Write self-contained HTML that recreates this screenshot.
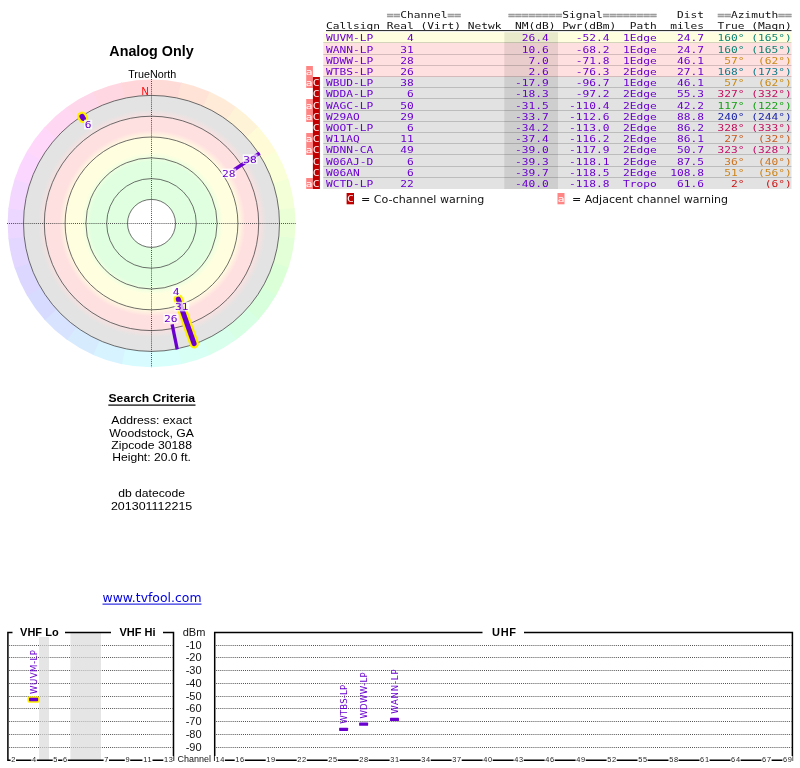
<!DOCTYPE html>
<html><head><meta charset="utf-8"><title>TV Fool radar plot</title>
<style>html,body{margin:0;padding:0;background:#fff}svg{display:block;will-change:transform}.m{font-family:"DejaVu Sans Mono", "Liberation Mono", monospace;font-size:11.21px}.s{font-family:"Liberation Sans", sans-serif}.d{font-family:"DejaVu Sans", "Liberation Sans", sans-serif}.c{font-family:"DejaVu Sans Condensed", "DejaVu Sans", "Liberation Sans", sans-serif}</style></head><body>
<svg width="800" height="768" viewBox="0 0 800 768">
<rect width="800" height="768" fill="#fff"/>
<defs><radialGradient id="rg" gradientUnits="userSpaceOnUse" cx="152.3" cy="223.4" r="128">
<stop offset="0.0000" stop-color="#e0ffe0"/>
<stop offset="0.4805" stop-color="#e0ffe0"/>
<stop offset="0.5547" stop-color="#ffffe0"/>
<stop offset="0.6641" stop-color="#ffffe0"/>
<stop offset="0.7266" stop-color="#ffe0e0"/>
<stop offset="0.8203" stop-color="#ffe0e0"/>
<stop offset="0.8906" stop-color="#e3e3e3"/>
<stop offset="1.0000" stop-color="#e3e3e3"/>
</radialGradient></defs>
<path d="M151.5 223.4 L151.12 79.50 A143.9 143.9 0 0 1 181.79 82.72 Z" fill="#ffdbd7"/>
<path d="M151.5 223.4 L181.05 82.57 A143.9 143.9 0 0 1 210.37 92.09 Z" fill="#ffe3d7"/>
<path d="M151.5 223.4 L209.69 91.79 A143.9 143.9 0 0 1 236.39 107.20 Z" fill="#ffebd7"/>
<path d="M151.5 223.4 L235.78 106.76 A143.9 143.9 0 0 1 258.69 127.39 Z" fill="#fff3d7"/>
<path d="M151.5 223.4 L258.19 126.83 A143.9 143.9 0 0 1 276.31 151.78 Z" fill="#fffbd7"/>
<path d="M151.5 223.4 L275.93 151.12 A143.9 143.9 0 0 1 288.47 179.29 Z" fill="#fbffd7"/>
<path d="M151.5 223.4 L288.24 178.57 A143.9 143.9 0 0 1 294.65 208.73 Z" fill="#f3ffd7"/>
<path d="M151.5 223.4 L294.57 207.98 A143.9 143.9 0 0 1 294.57 238.82 Z" fill="#ebffd7"/>
<path d="M151.5 223.4 L294.65 238.07 A143.9 143.9 0 0 1 288.24 268.23 Z" fill="#e3ffd7"/>
<path d="M151.5 223.4 L288.47 267.51 A143.9 143.9 0 0 1 275.93 295.68 Z" fill="#dbffd7"/>
<path d="M151.5 223.4 L276.31 295.02 A143.9 143.9 0 0 1 258.19 319.97 Z" fill="#d7ffdb"/>
<path d="M151.5 223.4 L258.69 319.41 A143.9 143.9 0 0 1 235.78 340.04 Z" fill="#d7ffe3"/>
<path d="M151.5 223.4 L236.39 339.60 A143.9 143.9 0 0 1 209.69 355.01 Z" fill="#d7ffeb"/>
<path d="M151.5 223.4 L210.37 354.71 A143.9 143.9 0 0 1 181.05 364.23 Z" fill="#d7fff3"/>
<path d="M151.5 223.4 L181.79 364.08 A143.9 143.9 0 0 1 151.12 367.30 Z" fill="#d7fffb"/>
<path d="M151.5 223.4 L151.88 367.30 A143.9 143.9 0 0 1 121.21 364.08 Z" fill="#d7fbff"/>
<path d="M151.5 223.4 L121.95 364.23 A143.9 143.9 0 0 1 92.63 354.71 Z" fill="#d7f3ff"/>
<path d="M151.5 223.4 L93.31 355.01 A143.9 143.9 0 0 1 66.61 339.60 Z" fill="#d7ebff"/>
<path d="M151.5 223.4 L67.22 340.04 A143.9 143.9 0 0 1 44.31 319.41 Z" fill="#d7e3ff"/>
<path d="M151.5 223.4 L44.81 319.97 A143.9 143.9 0 0 1 26.69 295.02 Z" fill="#d7dbff"/>
<path d="M151.5 223.4 L27.07 295.68 A143.9 143.9 0 0 1 14.53 267.51 Z" fill="#dbd7ff"/>
<path d="M151.5 223.4 L14.76 268.23 A143.9 143.9 0 0 1 8.35 238.07 Z" fill="#e3d7ff"/>
<path d="M151.5 223.4 L8.43 238.82 A143.9 143.9 0 0 1 8.43 207.98 Z" fill="#ebd7ff"/>
<path d="M151.5 223.4 L8.35 208.73 A143.9 143.9 0 0 1 14.76 178.57 Z" fill="#f3d7ff"/>
<path d="M151.5 223.4 L14.53 179.29 A143.9 143.9 0 0 1 27.07 151.12 Z" fill="#fbd7ff"/>
<path d="M151.5 223.4 L26.69 151.78 A143.9 143.9 0 0 1 44.81 126.83 Z" fill="#ffd7fb"/>
<path d="M151.5 223.4 L44.31 127.39 A143.9 143.9 0 0 1 67.22 106.76 Z" fill="#ffd7f3"/>
<path d="M151.5 223.4 L66.61 107.20 A143.9 143.9 0 0 1 93.31 91.79 Z" fill="#ffd7eb"/>
<path d="M151.5 223.4 L92.63 92.09 A143.9 143.9 0 0 1 121.95 82.57 Z" fill="#ffd7e3"/>
<path d="M151.5 223.4 L121.21 82.72 A143.9 143.9 0 0 1 151.88 79.50 Z" fill="#ffd7db"/>
<circle cx="151.5" cy="223.4" r="128" fill="url(#rg)"/>
<circle cx="151.5" cy="223.4" r="24" fill="#fff"/>
<circle cx="151.5" cy="223.4" r="24.0" fill="none" stroke="#383838" stroke-width="0.72"/>
<circle cx="151.5" cy="223.4" r="44.8" fill="none" stroke="#383838" stroke-width="0.72"/>
<circle cx="151.5" cy="223.4" r="65.6" fill="none" stroke="#383838" stroke-width="0.72"/>
<circle cx="151.5" cy="223.4" r="86.4" fill="none" stroke="#383838" stroke-width="0.72"/>
<circle cx="151.5" cy="223.4" r="107.2" fill="none" stroke="#383838" stroke-width="0.72"/>
<circle cx="151.5" cy="223.4" r="128.0" fill="none" stroke="#383838" stroke-width="0.72"/>
<line x1="7" y1="223.5" x2="296" y2="223.5" stroke="#1a1a1a" stroke-width="0.8" stroke-dasharray="0.95 1.11"/>
<line x1="151.5" y1="79" x2="151.5" y2="367.5" stroke="#1a1a1a" stroke-width="0.8" stroke-dasharray="0.95 1.11"/>
<line x1="234.11" y1="169.75" x2="259.69" y2="153.14" stroke="#6a00d0" stroke-width="3.4" stroke-linecap="butt"/>
<line x1="172.12" y1="324.31" x2="177.23" y2="349.30" stroke="#6a00d0" stroke-width="3.3" stroke-linecap="butt"/>
<line x1="178.30" y1="299.09" x2="194.09" y2="343.68" stroke="#fff000" stroke-width="9.6" stroke-linecap="round"/>
<line x1="178.30" y1="299.09" x2="194.09" y2="343.68" stroke="#6a00d0" stroke-width="5.0" stroke-linecap="round"/>
<line x1="83.26" y1="118.31" x2="82.06" y2="116.47" stroke="#fff000" stroke-width="9.8" stroke-linecap="round"/>
<line x1="83.26" y1="118.31" x2="82.06" y2="116.47" stroke="#6a00d0" stroke-width="5.2" stroke-linecap="round"/>
<rect x="221.4" y="168.6" width="14.8" height="9.6" fill="#fff" fill-opacity="0.72"/>
<text class="m" transform="translate(228.8 177.0) scale(1 0.84)" text-anchor="middle" fill="#6a00d0">28</text>
<rect x="242.7" y="154.3" width="14.8" height="9.6" fill="#fff" fill-opacity="0.72"/>
<text class="m" transform="translate(250.1 162.7) scale(1 0.84)" text-anchor="middle" fill="#6a00d0">38</text>
<rect x="84.0" y="119.8" width="8.2" height="9.6" fill="#fff" fill-opacity="0.72"/>
<text class="m" transform="translate(88.1 128.2) scale(1 0.84)" text-anchor="middle" fill="#6a00d0">6</text>
<rect x="163.4" y="313.7" width="14.8" height="9.6" fill="#fff" fill-opacity="0.72"/>
<text class="m" transform="translate(170.8 322.1) scale(1 0.84)" text-anchor="middle" fill="#6a00d0">26</text>
<rect x="171.9" y="286.7" width="8.2" height="9.6" fill="#fff" fill-opacity="0.72"/>
<text class="m" transform="translate(176.0 295.1) scale(1 0.84)" text-anchor="middle" fill="#6a00d0">4</text>
<rect x="174.4" y="301.8" width="14.8" height="9.6" fill="#fff" fill-opacity="0.72"/>
<text class="m" transform="translate(181.8 310.2) scale(1 0.84)" text-anchor="middle" fill="#6a00d0">31</text>
<text class="s" x="151.5" y="55.6" text-anchor="middle" font-size="14px" font-weight="bold" textLength="84.4" lengthAdjust="spacingAndGlyphs">Analog Only</text>
<text class="s" x="152.2" y="77.6" text-anchor="middle" font-size="11px" textLength="48" lengthAdjust="spacingAndGlyphs">TrueNorth</text>
<text class="s" x="145" y="94.8" text-anchor="middle" font-size="10px" fill="#f00">N</text>
<text class="s" x="151.8" y="401.8" text-anchor="middle" font-size="11.6px" font-weight="bold" textLength="86.6" lengthAdjust="spacingAndGlyphs">Search Criteria</text>
<rect x="108.3" y="404.5" width="87.2" height="1.2" fill="#000"/>
<text class="s" x="151.6" y="423.7" text-anchor="middle" font-size="11.6px" textLength="80.7" lengthAdjust="spacingAndGlyphs">Address: exact</text>
<text class="s" x="151.6" y="436.5" text-anchor="middle" font-size="11.6px" textLength="84.6" lengthAdjust="spacingAndGlyphs">Woodstock, GA</text>
<text class="s" x="151.6" y="448.7" text-anchor="middle" font-size="11.6px" textLength="80.7" lengthAdjust="spacingAndGlyphs">Zipcode 30188</text>
<text class="s" x="151.6" y="460.9" text-anchor="middle" font-size="11.6px" textLength="78.7" lengthAdjust="spacingAndGlyphs">Height: 20.0 ft.</text>
<text class="s" x="151.6" y="497.2" text-anchor="middle" font-size="11.6px" textLength="66.9" lengthAdjust="spacingAndGlyphs">db datecode</text>
<text class="s" x="151.6" y="509.7" text-anchor="middle" font-size="11.6px" textLength="81.3" lengthAdjust="spacingAndGlyphs">201301112215</text>
<text class="d" x="152" y="602" text-anchor="middle" font-size="12.2px" fill="#0000dd" textLength="99" lengthAdjust="spacingAndGlyphs">www.tvfool.com</text>
<rect x="102.5" y="603.6" width="99" height="1" fill="#0000dd"/>
<text class="m" transform="translate(386.75 17.60) scale(1 0.84)" text-anchor="start" fill="#9c9c9c" font-weight="bold" stroke="#9c9c9c" stroke-width="0.55">==</text>
<text class="m" transform="translate(400.25 17.60) scale(1 0.84)" text-anchor="start" fill="#111">Channel</text>
<text class="m" transform="translate(447.50 17.60) scale(1 0.84)" text-anchor="start" fill="#9c9c9c" font-weight="bold" stroke="#9c9c9c" stroke-width="0.55">==</text>
<text class="m" transform="translate(508.25 17.60) scale(1 0.84)" text-anchor="start" fill="#9c9c9c" font-weight="bold" stroke="#9c9c9c" stroke-width="0.55">========</text>
<text class="m" transform="translate(562.25 17.60) scale(1 0.84)" text-anchor="start" fill="#111">Signal</text>
<text class="m" transform="translate(602.75 17.60) scale(1 0.84)" text-anchor="start" fill="#9c9c9c" font-weight="bold" stroke="#9c9c9c" stroke-width="0.55">========</text>
<text class="m" transform="translate(677.00 17.60) scale(1 0.84)" text-anchor="start" fill="#111">Dist</text>
<text class="m" transform="translate(717.50 17.60) scale(1 0.84)" text-anchor="start" fill="#9c9c9c" font-weight="bold" stroke="#9c9c9c" stroke-width="0.55">==</text>
<text class="m" transform="translate(731.00 17.60) scale(1 0.84)" text-anchor="start" fill="#111">Azimuth</text>
<text class="m" transform="translate(778.25 17.60) scale(1 0.84)" text-anchor="start" fill="#9c9c9c" font-weight="bold" stroke="#9c9c9c" stroke-width="0.55">==</text>
<text class="m" transform="translate(326.00 28.90) scale(1 0.84)" text-anchor="start" fill="#111">Callsign</text>
<text class="m" transform="translate(386.75 28.90) scale(1 0.84)" text-anchor="start" fill="#111">Real</text>
<text class="m" transform="translate(420.50 28.90) scale(1 0.84)" text-anchor="start" fill="#111">(Virt)</text>
<text class="m" transform="translate(467.75 28.90) scale(1 0.84)" text-anchor="start" fill="#111">Netwk</text>
<text class="m" transform="translate(515.00 28.90) scale(1 0.84)" text-anchor="start" fill="#111">NM(dB)</text>
<text class="m" transform="translate(562.25 28.90) scale(1 0.84)" text-anchor="start" fill="#111">Pwr(dBm)</text>
<text class="m" transform="translate(629.75 28.90) scale(1 0.84)" text-anchor="start" fill="#111">Path</text>
<text class="m" transform="translate(670.25 28.90) scale(1 0.84)" text-anchor="start" fill="#111">miles</text>
<text class="m" transform="translate(717.50 28.90) scale(1 0.84)" text-anchor="start" fill="#111">True</text>
<text class="m" transform="translate(751.25 28.90) scale(1 0.84)" text-anchor="start" fill="#111">(Magn)</text>
<rect x="326" y="30" width="465.5" height="1.1" fill="#333"/>
<rect x="323.3" y="32.20" width="468.2" height="10.80" fill="#ffffe0"/>
<rect x="323.3" y="43.00" width="468.2" height="12.00" fill="#ffe0e0"/>
<rect x="323.3" y="55.00" width="468.2" height="11.00" fill="#ffe0e0"/>
<rect x="323.3" y="66.00" width="468.2" height="11.00" fill="#ffe0e0"/>
<rect x="323.3" y="77.00" width="468.2" height="11.00" fill="#e2e2e2"/>
<rect x="323.3" y="88.00" width="468.2" height="11.00" fill="#e2e2e2"/>
<rect x="323.3" y="99.00" width="468.2" height="12.00" fill="#e2e2e2"/>
<rect x="323.3" y="111.00" width="468.2" height="11.00" fill="#e2e2e2"/>
<rect x="323.3" y="122.00" width="468.2" height="11.00" fill="#e2e2e2"/>
<rect x="323.3" y="133.00" width="468.2" height="11.00" fill="#e2e2e2"/>
<rect x="323.3" y="144.00" width="468.2" height="11.00" fill="#e2e2e2"/>
<rect x="323.3" y="155.00" width="468.2" height="12.00" fill="#e2e2e2"/>
<rect x="323.3" y="167.00" width="468.2" height="11.00" fill="#e2e2e2"/>
<rect x="323.3" y="178.00" width="468.2" height="11.00" fill="#e2e2e2"/>
<rect x="323.3" y="42" width="468.2" height="1" fill="#000" fill-opacity="0.17"/>
<rect x="323.3" y="54" width="468.2" height="1" fill="#000" fill-opacity="0.17"/>
<rect x="323.3" y="65" width="468.2" height="1" fill="#000" fill-opacity="0.17"/>
<rect x="323.3" y="76" width="468.2" height="1" fill="#000" fill-opacity="0.17"/>
<rect x="323.3" y="87" width="468.2" height="1" fill="#000" fill-opacity="0.17"/>
<rect x="323.3" y="98" width="468.2" height="1" fill="#000" fill-opacity="0.17"/>
<rect x="323.3" y="110" width="468.2" height="1" fill="#000" fill-opacity="0.17"/>
<rect x="323.3" y="121" width="468.2" height="1" fill="#000" fill-opacity="0.17"/>
<rect x="323.3" y="132" width="468.2" height="1" fill="#000" fill-opacity="0.17"/>
<rect x="323.3" y="143" width="468.2" height="1" fill="#000" fill-opacity="0.17"/>
<rect x="323.3" y="154" width="468.2" height="1" fill="#000" fill-opacity="0.17"/>
<rect x="323.3" y="166" width="468.2" height="1" fill="#000" fill-opacity="0.17"/>
<rect x="323.3" y="177" width="468.2" height="1" fill="#000" fill-opacity="0.17"/>
<rect x="504.3" y="32.20" width="53.7" height="156.80" fill="#000" fill-opacity="0.085"/>
<text class="m" transform="translate(326.00 41.10) scale(1 0.84)" text-anchor="start" fill="#6a00d0">WUVM-LP</text>
<text class="m" transform="translate(413.75 41.10) scale(1 0.84)" text-anchor="end" fill="#6a00d0">4</text>
<text class="m" transform="translate(548.75 41.10) scale(1 0.84)" text-anchor="end" fill="#6a00d0">26.4</text>
<text class="m" transform="translate(609.50 41.10) scale(1 0.84)" text-anchor="end" fill="#6a00d0">-52.4</text>
<text class="m" transform="translate(623.00 41.10) scale(1 0.84)" text-anchor="start" fill="#6a00d0">1Edge</text>
<text class="m" transform="translate(704.00 41.10) scale(1 0.84)" text-anchor="end" fill="#6a00d0">24.7</text>
<text class="m" transform="translate(744.50 41.10) scale(1 0.84)" text-anchor="end" fill="#0c8474">160°</text>
<text class="m" transform="translate(791.75 41.10) scale(1 0.84)" text-anchor="end" fill="#0c8474">(165°)</text>
<text class="m" transform="translate(326.00 53.10) scale(1 0.84)" text-anchor="start" fill="#6a00d0">WANN-LP</text>
<text class="m" transform="translate(413.75 53.10) scale(1 0.84)" text-anchor="end" fill="#6a00d0">31</text>
<text class="m" transform="translate(548.75 53.10) scale(1 0.84)" text-anchor="end" fill="#6a00d0">10.6</text>
<text class="m" transform="translate(609.50 53.10) scale(1 0.84)" text-anchor="end" fill="#6a00d0">-68.2</text>
<text class="m" transform="translate(623.00 53.10) scale(1 0.84)" text-anchor="start" fill="#6a00d0">1Edge</text>
<text class="m" transform="translate(704.00 53.10) scale(1 0.84)" text-anchor="end" fill="#6a00d0">24.7</text>
<text class="m" transform="translate(744.50 53.10) scale(1 0.84)" text-anchor="end" fill="#0c8474">160°</text>
<text class="m" transform="translate(791.75 53.10) scale(1 0.84)" text-anchor="end" fill="#0c8474">(165°)</text>
<text class="m" transform="translate(326.00 64.10) scale(1 0.84)" text-anchor="start" fill="#6a00d0">WDWW-LP</text>
<text class="m" transform="translate(413.75 64.10) scale(1 0.84)" text-anchor="end" fill="#6a00d0">28</text>
<text class="m" transform="translate(548.75 64.10) scale(1 0.84)" text-anchor="end" fill="#6a00d0">7.0</text>
<text class="m" transform="translate(609.50 64.10) scale(1 0.84)" text-anchor="end" fill="#6a00d0">-71.8</text>
<text class="m" transform="translate(623.00 64.10) scale(1 0.84)" text-anchor="start" fill="#6a00d0">1Edge</text>
<text class="m" transform="translate(704.00 64.10) scale(1 0.84)" text-anchor="end" fill="#6a00d0">46.1</text>
<text class="m" transform="translate(744.50 64.10) scale(1 0.84)" text-anchor="end" fill="#c88a14">57°</text>
<text class="m" transform="translate(791.75 64.10) scale(1 0.84)" text-anchor="end" fill="#c88a14">(62°)</text>
<text class="m" transform="translate(326.00 75.10) scale(1 0.84)" text-anchor="start" fill="#6a00d0">WTBS-LP</text>
<text class="m" transform="translate(413.75 75.10) scale(1 0.84)" text-anchor="end" fill="#6a00d0">26</text>
<text class="m" transform="translate(548.75 75.10) scale(1 0.84)" text-anchor="end" fill="#6a00d0">2.6</text>
<text class="m" transform="translate(609.50 75.10) scale(1 0.84)" text-anchor="end" fill="#6a00d0">-76.3</text>
<text class="m" transform="translate(623.00 75.10) scale(1 0.84)" text-anchor="start" fill="#6a00d0">2Edge</text>
<text class="m" transform="translate(704.00 75.10) scale(1 0.84)" text-anchor="end" fill="#6a00d0">27.1</text>
<text class="m" transform="translate(744.50 75.10) scale(1 0.84)" text-anchor="end" fill="#0c7c8c">168°</text>
<text class="m" transform="translate(791.75 75.10) scale(1 0.84)" text-anchor="end" fill="#0c7c8c">(173°)</text>
<rect x="306.2" y="66.00" width="6.7" height="11.00" fill="#ff8484"/>
<text class="m" transform="translate(309.2 75.10) scale(1 0.84)" text-anchor="middle" fill="#ffffff">a</text>
<text class="m" transform="translate(326.00 86.10) scale(1 0.84)" text-anchor="start" fill="#6a00d0">WBUD-LP</text>
<text class="m" transform="translate(413.75 86.10) scale(1 0.84)" text-anchor="end" fill="#6a00d0">38</text>
<text class="m" transform="translate(548.75 86.10) scale(1 0.84)" text-anchor="end" fill="#6a00d0">-17.9</text>
<text class="m" transform="translate(609.50 86.10) scale(1 0.84)" text-anchor="end" fill="#6a00d0">-96.7</text>
<text class="m" transform="translate(623.00 86.10) scale(1 0.84)" text-anchor="start" fill="#6a00d0">1Edge</text>
<text class="m" transform="translate(704.00 86.10) scale(1 0.84)" text-anchor="end" fill="#6a00d0">46.1</text>
<text class="m" transform="translate(744.50 86.10) scale(1 0.84)" text-anchor="end" fill="#c88a14">57°</text>
<text class="m" transform="translate(791.75 86.10) scale(1 0.84)" text-anchor="end" fill="#c88a14">(62°)</text>
<rect x="306.2" y="77.00" width="6.7" height="11.00" fill="#ff8484"/>
<text class="m" transform="translate(309.2 86.10) scale(1 0.84)" text-anchor="middle" fill="#ffffff">a</text>
<rect x="312.9" y="77.00" width="7" height="11.00" fill="#c00000"/>
<text class="m" transform="translate(316.1 86.10) scale(1 0.84)" text-anchor="middle" fill="#fff0f0">C</text>
<text class="m" transform="translate(326.00 97.10) scale(1 0.84)" text-anchor="start" fill="#6a00d0">WDDA-LP</text>
<text class="m" transform="translate(413.75 97.10) scale(1 0.84)" text-anchor="end" fill="#6a00d0">6</text>
<text class="m" transform="translate(548.75 97.10) scale(1 0.84)" text-anchor="end" fill="#6a00d0">-18.3</text>
<text class="m" transform="translate(609.50 97.10) scale(1 0.84)" text-anchor="end" fill="#6a00d0">-97.2</text>
<text class="m" transform="translate(623.00 97.10) scale(1 0.84)" text-anchor="start" fill="#6a00d0">2Edge</text>
<text class="m" transform="translate(704.00 97.10) scale(1 0.84)" text-anchor="end" fill="#6a00d0">55.3</text>
<text class="m" transform="translate(744.50 97.10) scale(1 0.84)" text-anchor="end" fill="#c40c5c">327°</text>
<text class="m" transform="translate(791.75 97.10) scale(1 0.84)" text-anchor="end" fill="#c40c5c">(332°)</text>
<rect x="312.9" y="88.00" width="7" height="11.00" fill="#c00000"/>
<text class="m" transform="translate(316.1 97.10) scale(1 0.84)" text-anchor="middle" fill="#fff0f0">C</text>
<text class="m" transform="translate(326.00 109.10) scale(1 0.84)" text-anchor="start" fill="#6a00d0">WAGC-LP</text>
<text class="m" transform="translate(413.75 109.10) scale(1 0.84)" text-anchor="end" fill="#6a00d0">50</text>
<text class="m" transform="translate(548.75 109.10) scale(1 0.84)" text-anchor="end" fill="#6a00d0">-31.5</text>
<text class="m" transform="translate(609.50 109.10) scale(1 0.84)" text-anchor="end" fill="#6a00d0">-110.4</text>
<text class="m" transform="translate(623.00 109.10) scale(1 0.84)" text-anchor="start" fill="#6a00d0">2Edge</text>
<text class="m" transform="translate(704.00 109.10) scale(1 0.84)" text-anchor="end" fill="#6a00d0">42.2</text>
<text class="m" transform="translate(744.50 109.10) scale(1 0.84)" text-anchor="end" fill="#14a014">117°</text>
<text class="m" transform="translate(791.75 109.10) scale(1 0.84)" text-anchor="end" fill="#14a014">(122°)</text>
<rect x="306.2" y="99.00" width="6.7" height="12.00" fill="#ff8484"/>
<text class="m" transform="translate(309.2 109.10) scale(1 0.84)" text-anchor="middle" fill="#ffffff">a</text>
<rect x="312.9" y="99.00" width="7" height="12.00" fill="#c00000"/>
<text class="m" transform="translate(316.1 109.10) scale(1 0.84)" text-anchor="middle" fill="#fff0f0">C</text>
<text class="m" transform="translate(326.00 120.10) scale(1 0.84)" text-anchor="start" fill="#6a00d0">W29AO</text>
<text class="m" transform="translate(413.75 120.10) scale(1 0.84)" text-anchor="end" fill="#6a00d0">29</text>
<text class="m" transform="translate(548.75 120.10) scale(1 0.84)" text-anchor="end" fill="#6a00d0">-33.7</text>
<text class="m" transform="translate(609.50 120.10) scale(1 0.84)" text-anchor="end" fill="#6a00d0">-112.6</text>
<text class="m" transform="translate(623.00 120.10) scale(1 0.84)" text-anchor="start" fill="#6a00d0">2Edge</text>
<text class="m" transform="translate(704.00 120.10) scale(1 0.84)" text-anchor="end" fill="#6a00d0">88.8</text>
<text class="m" transform="translate(744.50 120.10) scale(1 0.84)" text-anchor="end" fill="#1c24a8">240°</text>
<text class="m" transform="translate(791.75 120.10) scale(1 0.84)" text-anchor="end" fill="#1c24a8">(244°)</text>
<rect x="306.2" y="111.00" width="6.7" height="11.00" fill="#ff8484"/>
<text class="m" transform="translate(309.2 120.10) scale(1 0.84)" text-anchor="middle" fill="#ffffff">a</text>
<rect x="312.9" y="111.00" width="7" height="11.00" fill="#c00000"/>
<text class="m" transform="translate(316.1 120.10) scale(1 0.84)" text-anchor="middle" fill="#fff0f0">C</text>
<text class="m" transform="translate(326.00 131.10) scale(1 0.84)" text-anchor="start" fill="#6a00d0">WOOT-LP</text>
<text class="m" transform="translate(413.75 131.10) scale(1 0.84)" text-anchor="end" fill="#6a00d0">6</text>
<text class="m" transform="translate(548.75 131.10) scale(1 0.84)" text-anchor="end" fill="#6a00d0">-34.2</text>
<text class="m" transform="translate(609.50 131.10) scale(1 0.84)" text-anchor="end" fill="#6a00d0">-113.0</text>
<text class="m" transform="translate(623.00 131.10) scale(1 0.84)" text-anchor="start" fill="#6a00d0">2Edge</text>
<text class="m" transform="translate(704.00 131.10) scale(1 0.84)" text-anchor="end" fill="#6a00d0">86.2</text>
<text class="m" transform="translate(744.50 131.10) scale(1 0.84)" text-anchor="end" fill="#c40c58">328°</text>
<text class="m" transform="translate(791.75 131.10) scale(1 0.84)" text-anchor="end" fill="#c40c58">(333°)</text>
<rect x="312.9" y="122.00" width="7" height="11.00" fill="#c00000"/>
<text class="m" transform="translate(316.1 131.10) scale(1 0.84)" text-anchor="middle" fill="#fff0f0">C</text>
<text class="m" transform="translate(326.00 142.10) scale(1 0.84)" text-anchor="start" fill="#6a00d0">W11AQ</text>
<text class="m" transform="translate(413.75 142.10) scale(1 0.84)" text-anchor="end" fill="#6a00d0">11</text>
<text class="m" transform="translate(548.75 142.10) scale(1 0.84)" text-anchor="end" fill="#6a00d0">-37.4</text>
<text class="m" transform="translate(609.50 142.10) scale(1 0.84)" text-anchor="end" fill="#6a00d0">-116.2</text>
<text class="m" transform="translate(623.00 142.10) scale(1 0.84)" text-anchor="start" fill="#6a00d0">2Edge</text>
<text class="m" transform="translate(704.00 142.10) scale(1 0.84)" text-anchor="end" fill="#6a00d0">86.1</text>
<text class="m" transform="translate(744.50 142.10) scale(1 0.84)" text-anchor="end" fill="#c85a1c">27°</text>
<text class="m" transform="translate(791.75 142.10) scale(1 0.84)" text-anchor="end" fill="#c85a1c">(32°)</text>
<rect x="306.2" y="133.00" width="6.7" height="11.00" fill="#ff8484"/>
<text class="m" transform="translate(309.2 142.10) scale(1 0.84)" text-anchor="middle" fill="#ffffff">a</text>
<rect x="312.9" y="133.00" width="7" height="11.00" fill="#c00000"/>
<text class="m" transform="translate(316.1 142.10) scale(1 0.84)" text-anchor="middle" fill="#fff0f0">C</text>
<text class="m" transform="translate(326.00 153.10) scale(1 0.84)" text-anchor="start" fill="#6a00d0">WDNN-CA</text>
<text class="m" transform="translate(413.75 153.10) scale(1 0.84)" text-anchor="end" fill="#6a00d0">49</text>
<text class="m" transform="translate(548.75 153.10) scale(1 0.84)" text-anchor="end" fill="#6a00d0">-39.0</text>
<text class="m" transform="translate(609.50 153.10) scale(1 0.84)" text-anchor="end" fill="#6a00d0">-117.9</text>
<text class="m" transform="translate(623.00 153.10) scale(1 0.84)" text-anchor="start" fill="#6a00d0">2Edge</text>
<text class="m" transform="translate(704.00 153.10) scale(1 0.84)" text-anchor="end" fill="#6a00d0">50.7</text>
<text class="m" transform="translate(744.50 153.10) scale(1 0.84)" text-anchor="end" fill="#c40c68">323°</text>
<text class="m" transform="translate(791.75 153.10) scale(1 0.84)" text-anchor="end" fill="#c40c68">(328°)</text>
<rect x="306.2" y="144.00" width="6.7" height="11.00" fill="#ff8484"/>
<text class="m" transform="translate(309.2 153.10) scale(1 0.84)" text-anchor="middle" fill="#ffffff">a</text>
<rect x="312.9" y="144.00" width="7" height="11.00" fill="#c00000"/>
<text class="m" transform="translate(316.1 153.10) scale(1 0.84)" text-anchor="middle" fill="#fff0f0">C</text>
<text class="m" transform="translate(326.00 165.10) scale(1 0.84)" text-anchor="start" fill="#6a00d0">W06AJ-D</text>
<text class="m" transform="translate(413.75 165.10) scale(1 0.84)" text-anchor="end" fill="#6a00d0">6</text>
<text class="m" transform="translate(548.75 165.10) scale(1 0.84)" text-anchor="end" fill="#6a00d0">-39.3</text>
<text class="m" transform="translate(609.50 165.10) scale(1 0.84)" text-anchor="end" fill="#6a00d0">-118.1</text>
<text class="m" transform="translate(623.00 165.10) scale(1 0.84)" text-anchor="start" fill="#6a00d0">2Edge</text>
<text class="m" transform="translate(704.00 165.10) scale(1 0.84)" text-anchor="end" fill="#6a00d0">87.5</text>
<text class="m" transform="translate(744.50 165.10) scale(1 0.84)" text-anchor="end" fill="#cc7420">36°</text>
<text class="m" transform="translate(791.75 165.10) scale(1 0.84)" text-anchor="end" fill="#cc7420">(40°)</text>
<rect x="312.9" y="155.00" width="7" height="12.00" fill="#c00000"/>
<text class="m" transform="translate(316.1 165.10) scale(1 0.84)" text-anchor="middle" fill="#fff0f0">C</text>
<text class="m" transform="translate(326.00 176.10) scale(1 0.84)" text-anchor="start" fill="#6a00d0">W06AN</text>
<text class="m" transform="translate(413.75 176.10) scale(1 0.84)" text-anchor="end" fill="#6a00d0">6</text>
<text class="m" transform="translate(548.75 176.10) scale(1 0.84)" text-anchor="end" fill="#6a00d0">-39.7</text>
<text class="m" transform="translate(609.50 176.10) scale(1 0.84)" text-anchor="end" fill="#6a00d0">-118.5</text>
<text class="m" transform="translate(623.00 176.10) scale(1 0.84)" text-anchor="start" fill="#6a00d0">2Edge</text>
<text class="m" transform="translate(704.00 176.10) scale(1 0.84)" text-anchor="end" fill="#6a00d0">108.8</text>
<text class="m" transform="translate(744.50 176.10) scale(1 0.84)" text-anchor="end" fill="#cc8418">51°</text>
<text class="m" transform="translate(791.75 176.10) scale(1 0.84)" text-anchor="end" fill="#cc8418">(56°)</text>
<rect x="312.9" y="167.00" width="7" height="11.00" fill="#c00000"/>
<text class="m" transform="translate(316.1 176.10) scale(1 0.84)" text-anchor="middle" fill="#fff0f0">C</text>
<text class="m" transform="translate(326.00 187.10) scale(1 0.84)" text-anchor="start" fill="#6a00d0">WCTD-LP</text>
<text class="m" transform="translate(413.75 187.10) scale(1 0.84)" text-anchor="end" fill="#6a00d0">22</text>
<text class="m" transform="translate(548.75 187.10) scale(1 0.84)" text-anchor="end" fill="#6a00d0">-40.0</text>
<text class="m" transform="translate(609.50 187.10) scale(1 0.84)" text-anchor="end" fill="#6a00d0">-118.8</text>
<text class="m" transform="translate(623.00 187.10) scale(1 0.84)" text-anchor="start" fill="#6a00d0">Tropo</text>
<text class="m" transform="translate(704.00 187.10) scale(1 0.84)" text-anchor="end" fill="#6a00d0">61.6</text>
<text class="m" transform="translate(744.50 187.10) scale(1 0.84)" text-anchor="end" fill="#cc1414">2°</text>
<text class="m" transform="translate(791.75 187.10) scale(1 0.84)" text-anchor="end" fill="#cc1414">(6°)</text>
<rect x="306.2" y="178.00" width="6.7" height="11.00" fill="#ff8484"/>
<text class="m" transform="translate(309.2 187.10) scale(1 0.84)" text-anchor="middle" fill="#ffffff">a</text>
<rect x="312.9" y="178.00" width="7" height="11.00" fill="#c00000"/>
<text class="m" transform="translate(316.1 187.10) scale(1 0.84)" text-anchor="middle" fill="#fff0f0">C</text>
<rect x="346.6" y="193" width="7.4" height="11.3" fill="#c00000"/>
<text class="m" transform="translate(350.3 202.3) scale(1 0.84)" text-anchor="middle" fill="#fff0f0">C</text>
<text class="d" x="361" y="203" font-size="11px" fill="#111" textLength="123.4" lengthAdjust="spacingAndGlyphs">= Co-channel warning</text>
<rect x="557.5" y="193" width="7" height="11.3" fill="#ff8484"/>
<text class="m" transform="translate(561 202.3) scale(1 0.84)" text-anchor="middle" fill="#ffffff">a</text>
<text class="d" x="572" y="203" font-size="11px" fill="#111" textLength="156" lengthAdjust="spacingAndGlyphs">= Adjacent channel warning</text>
<line x1="9.2" y1="645.50" x2="172.5" y2="645.50" stroke="#333" stroke-width="0.9" stroke-dasharray="0.95 1.11"/>
<line x1="216.2" y1="645.50" x2="791.5" y2="645.50" stroke="#333" stroke-width="0.9" stroke-dasharray="0.95 1.11"/>
<text class="s" x="201.6" y="648.80" text-anchor="end" font-size="11px" fill="#111">-10</text>
<line x1="9.2" y1="657.50" x2="172.5" y2="657.50" stroke="#333" stroke-width="0.9" stroke-dasharray="0.95 1.11"/>
<line x1="216.2" y1="657.50" x2="791.5" y2="657.50" stroke="#333" stroke-width="0.9" stroke-dasharray="0.95 1.11"/>
<text class="s" x="201.6" y="660.80" text-anchor="end" font-size="11px" fill="#111">-20</text>
<line x1="9.2" y1="670.50" x2="172.5" y2="670.50" stroke="#333" stroke-width="0.9" stroke-dasharray="0.95 1.11"/>
<line x1="216.2" y1="670.50" x2="791.5" y2="670.50" stroke="#333" stroke-width="0.9" stroke-dasharray="0.95 1.11"/>
<text class="s" x="201.6" y="673.80" text-anchor="end" font-size="11px" fill="#111">-30</text>
<line x1="9.2" y1="683.50" x2="172.5" y2="683.50" stroke="#333" stroke-width="0.9" stroke-dasharray="0.95 1.11"/>
<line x1="216.2" y1="683.50" x2="791.5" y2="683.50" stroke="#333" stroke-width="0.9" stroke-dasharray="0.95 1.11"/>
<text class="s" x="201.6" y="686.80" text-anchor="end" font-size="11px" fill="#111">-40</text>
<line x1="9.2" y1="696.50" x2="172.5" y2="696.50" stroke="#333" stroke-width="0.9" stroke-dasharray="0.95 1.11"/>
<line x1="216.2" y1="696.50" x2="791.5" y2="696.50" stroke="#333" stroke-width="0.9" stroke-dasharray="0.95 1.11"/>
<text class="s" x="201.6" y="699.80" text-anchor="end" font-size="11px" fill="#111">-50</text>
<line x1="9.2" y1="708.50" x2="172.5" y2="708.50" stroke="#333" stroke-width="0.9" stroke-dasharray="0.95 1.11"/>
<line x1="216.2" y1="708.50" x2="791.5" y2="708.50" stroke="#333" stroke-width="0.9" stroke-dasharray="0.95 1.11"/>
<text class="s" x="201.6" y="711.80" text-anchor="end" font-size="11px" fill="#111">-60</text>
<line x1="9.2" y1="721.50" x2="172.5" y2="721.50" stroke="#333" stroke-width="0.9" stroke-dasharray="0.95 1.11"/>
<line x1="216.2" y1="721.50" x2="791.5" y2="721.50" stroke="#333" stroke-width="0.9" stroke-dasharray="0.95 1.11"/>
<text class="s" x="201.6" y="724.80" text-anchor="end" font-size="11px" fill="#111">-70</text>
<line x1="9.2" y1="734.50" x2="172.5" y2="734.50" stroke="#333" stroke-width="0.9" stroke-dasharray="0.95 1.11"/>
<line x1="216.2" y1="734.50" x2="791.5" y2="734.50" stroke="#333" stroke-width="0.9" stroke-dasharray="0.95 1.11"/>
<text class="s" x="201.6" y="737.80" text-anchor="end" font-size="11px" fill="#111">-80</text>
<line x1="9.2" y1="747.50" x2="172.5" y2="747.50" stroke="#333" stroke-width="0.9" stroke-dasharray="0.95 1.11"/>
<line x1="216.2" y1="747.50" x2="791.5" y2="747.50" stroke="#333" stroke-width="0.9" stroke-dasharray="0.95 1.11"/>
<text class="s" x="201.6" y="750.80" text-anchor="end" font-size="11px" fill="#111">-90</text>
<text class="s" x="194" y="635.5" text-anchor="middle" font-size="11px" fill="#111">dBm</text>
<text class="s" x="194.2" y="761.6" text-anchor="middle" font-size="9px" fill="#111" textLength="33.5" lengthAdjust="spacingAndGlyphs">Channel</text>
<rect x="39.1" y="633" width="9.9" height="127" fill="#d8d8d8" fill-opacity="0.68"/>
<rect x="70.4" y="633" width="30.6" height="127" fill="#d8d8d8" fill-opacity="0.68"/>
<path d="M7.9 761.1 V632.6 H173.5 V761.1" fill="none" stroke="#000" stroke-width="1.5"/>
<path d="M7.9 760.35 H173.5" fill="none" stroke="#000" stroke-width="1.5"/>
<path d="M214.7 761.1 V632.6 H792.4 V761.1" fill="none" stroke="#000" stroke-width="1.5"/>
<path d="M214.7 760.35 H792.4" fill="none" stroke="#000" stroke-width="1.5"/>
<rect x="12.5" y="625" width="52.5" height="12" fill="#fff"/>
<text class="s" x="20" y="636" font-size="11px" font-weight="bold" textLength="38.75" lengthAdjust="spacing">VHF Lo</text>
<rect x="111" y="625" width="52" height="12" fill="#fff"/>
<text class="s" x="119.4" y="636" font-size="11px" font-weight="bold" textLength="36.19999999999999" lengthAdjust="spacing">VHF Hi</text>
<rect x="482.5" y="625" width="41.5" height="12" fill="#fff"/>
<text class="s" x="492" y="636" font-size="11px" font-weight="bold" textLength="24" lengthAdjust="spacing">UHF</text>
<rect x="10.6" y="756" width="5.4" height="7" fill="#fff"/>
<text class="s" x="13.65" y="761.8" text-anchor="middle" font-size="7.4px" letter-spacing="0.7" fill="#222">2</text>
<rect x="31.4" y="756" width="5.4" height="7" fill="#fff"/>
<text class="s" x="34.45" y="761.8" text-anchor="middle" font-size="7.4px" letter-spacing="0.7" fill="#222">4</text>
<rect x="52.7" y="756" width="5.4" height="7" fill="#fff"/>
<text class="s" x="55.75" y="761.8" text-anchor="middle" font-size="7.4px" letter-spacing="0.7" fill="#222">5</text>
<rect x="62.4" y="756" width="5.4" height="7" fill="#fff"/>
<text class="s" x="65.45" y="761.8" text-anchor="middle" font-size="7.4px" letter-spacing="0.7" fill="#222">6</text>
<rect x="103.6" y="756" width="5.4" height="7" fill="#fff"/>
<text class="s" x="106.60" y="761.8" text-anchor="middle" font-size="7.4px" letter-spacing="0.7" fill="#222">7</text>
<rect x="124.8" y="756" width="5.4" height="7" fill="#fff"/>
<text class="s" x="127.85" y="761.8" text-anchor="middle" font-size="7.4px" letter-spacing="0.7" fill="#222">9</text>
<rect x="142.4" y="756" width="10.1" height="7" fill="#fff"/>
<text class="s" x="147.85" y="761.8" text-anchor="middle" font-size="7.4px" letter-spacing="0.7" fill="#222">11</text>
<rect x="163.3" y="756" width="10.1" height="7" fill="#fff"/>
<text class="s" x="168.75" y="761.8" text-anchor="middle" font-size="7.4px" letter-spacing="0.7" fill="#222">13</text>
<rect x="234.7" y="756" width="10.1" height="7" fill="#fff"/>
<text class="s" x="240.07" y="761.8" text-anchor="middle" font-size="7.4px" letter-spacing="0.7" fill="#222">16</text>
<rect x="265.7" y="756" width="10.1" height="7" fill="#fff"/>
<text class="s" x="271.07" y="761.8" text-anchor="middle" font-size="7.4px" letter-spacing="0.7" fill="#222">19</text>
<rect x="296.7" y="756" width="10.1" height="7" fill="#fff"/>
<text class="s" x="302.06" y="761.8" text-anchor="middle" font-size="7.4px" letter-spacing="0.7" fill="#222">22</text>
<rect x="327.6" y="756" width="10.1" height="7" fill="#fff"/>
<text class="s" x="333.05" y="761.8" text-anchor="middle" font-size="7.4px" letter-spacing="0.7" fill="#222">25</text>
<rect x="358.6" y="756" width="10.1" height="7" fill="#fff"/>
<text class="s" x="364.04" y="761.8" text-anchor="middle" font-size="7.4px" letter-spacing="0.7" fill="#222">28</text>
<rect x="389.6" y="756" width="10.1" height="7" fill="#fff"/>
<text class="s" x="395.03" y="761.8" text-anchor="middle" font-size="7.4px" letter-spacing="0.7" fill="#222">31</text>
<rect x="420.6" y="756" width="10.1" height="7" fill="#fff"/>
<text class="s" x="426.02" y="761.8" text-anchor="middle" font-size="7.4px" letter-spacing="0.7" fill="#222">34</text>
<rect x="451.6" y="756" width="10.1" height="7" fill="#fff"/>
<text class="s" x="457.00" y="761.8" text-anchor="middle" font-size="7.4px" letter-spacing="0.7" fill="#222">37</text>
<rect x="482.6" y="756" width="10.1" height="7" fill="#fff"/>
<text class="s" x="488.00" y="761.8" text-anchor="middle" font-size="7.4px" letter-spacing="0.7" fill="#222">40</text>
<rect x="513.6" y="756" width="10.1" height="7" fill="#fff"/>
<text class="s" x="518.99" y="761.8" text-anchor="middle" font-size="7.4px" letter-spacing="0.7" fill="#222">43</text>
<rect x="544.6" y="756" width="10.1" height="7" fill="#fff"/>
<text class="s" x="549.98" y="761.8" text-anchor="middle" font-size="7.4px" letter-spacing="0.7" fill="#222">46</text>
<rect x="575.6" y="756" width="10.1" height="7" fill="#fff"/>
<text class="s" x="580.97" y="761.8" text-anchor="middle" font-size="7.4px" letter-spacing="0.7" fill="#222">49</text>
<rect x="606.6" y="756" width="10.1" height="7" fill="#fff"/>
<text class="s" x="611.96" y="761.8" text-anchor="middle" font-size="7.4px" letter-spacing="0.7" fill="#222">52</text>
<rect x="637.5" y="756" width="10.1" height="7" fill="#fff"/>
<text class="s" x="642.95" y="761.8" text-anchor="middle" font-size="7.4px" letter-spacing="0.7" fill="#222">55</text>
<rect x="668.5" y="756" width="10.1" height="7" fill="#fff"/>
<text class="s" x="673.94" y="761.8" text-anchor="middle" font-size="7.4px" letter-spacing="0.7" fill="#222">58</text>
<rect x="699.5" y="756" width="10.1" height="7" fill="#fff"/>
<text class="s" x="704.93" y="761.8" text-anchor="middle" font-size="7.4px" letter-spacing="0.7" fill="#222">61</text>
<rect x="730.5" y="756" width="10.1" height="7" fill="#fff"/>
<text class="s" x="735.91" y="761.8" text-anchor="middle" font-size="7.4px" letter-spacing="0.7" fill="#222">64</text>
<rect x="761.5" y="756" width="10.1" height="7" fill="#fff"/>
<text class="s" x="766.90" y="761.8" text-anchor="middle" font-size="7.4px" letter-spacing="0.7" fill="#222">67</text>
<rect x="214.8" y="756" width="10.1" height="7" fill="#fff"/>
<text class="s" x="220.25" y="761.8" text-anchor="middle" font-size="7.4px" letter-spacing="0.7" fill="#222">14</text>
<rect x="782.4" y="756" width="10.1" height="7" fill="#fff"/>
<text class="s" x="787.75" y="761.8" text-anchor="middle" font-size="7.4px" letter-spacing="0.7" fill="#222">69</text>
<rect x="27.40" y="696.20" width="12.4" height="6.6" rx="2.6" fill="#fff000"/>
<rect x="29.10" y="697.85" width="9" height="3.3" rx="0.6" fill="#6a00d0"/>
<text class="c" transform="translate(37.10 693.90) rotate(-90)" font-size="9.5px" fill="#6a00d0" textLength="43.75" lengthAdjust="spacing">WUVM-LP</text>
<rect x="339.10" y="727.65" width="9" height="3.3" rx="0.6" fill="#6a00d0"/>
<text class="c" transform="translate(347.10 723.70) rotate(-90)" font-size="9.5px" fill="#6a00d0" textLength="38.75" lengthAdjust="spacing">WTBS-LP</text>
<rect x="359.10" y="722.55" width="9" height="3.3" rx="0.6" fill="#6a00d0"/>
<text class="c" transform="translate(367.10 718.60) rotate(-90)" font-size="9.5px" fill="#6a00d0" textLength="46.2" lengthAdjust="spacing">WDWW-LP</text>
<rect x="390.00" y="717.75" width="9" height="3.3" rx="0.6" fill="#6a00d0"/>
<text class="c" transform="translate(398.00 713.80) rotate(-90)" font-size="9.5px" fill="#6a00d0" textLength="44.4" lengthAdjust="spacing">WANN-LP</text>
</svg></body></html>
